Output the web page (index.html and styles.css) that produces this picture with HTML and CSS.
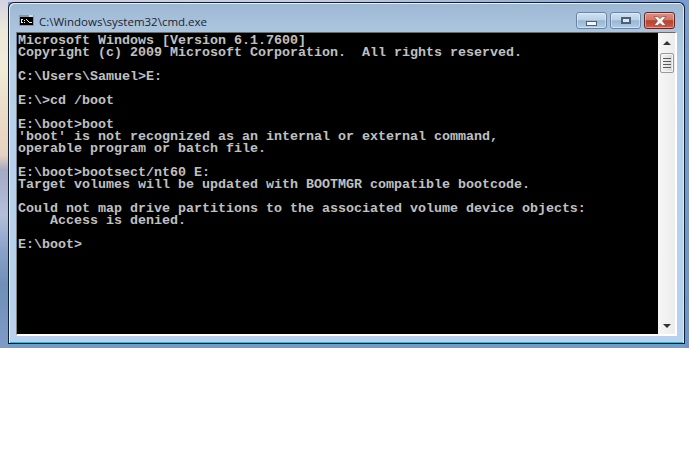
FILE: index.html
```html
<!DOCTYPE html>
<html>
<head>
<meta charset="utf-8">
<title>cmd</title>
<link rel="stylesheet" href="styles.css">
</head>
<body>
<div class="desktop">
  <div class="window">
    <div class="titlebar">
      <svg class="appicon" width="15" height="11" viewBox="0 0 15 11" shape-rendering="crispEdges">
        <rect width="15" height="11" fill="#8f959c"/>
        <rect x="10" y="0" width="4" height="2" fill="#d5d9dd"/>
        <rect x="1" y="2" width="13" height="8" fill="#000"/>
        <path d="M2 4h2v1h-2zM2 5h1v2h-1zM2 7h2v1h-2zM5 5h1v1h-1zM5 7h1v1h-1zM7 4h1v1h-1zM8 5h1v1h-1zM9 6h1v1h-1zM10 7h3v1h-3z" fill="#f0f0f0"/>
      </svg>
      <span class="title">C:\Windows\system32\cmd.exe</span>
      <div class="controls">
        <div class="btn"><span class="min"></span></div>
        <div class="btn"><span class="max"></span></div>
        <div class="btn close">
          <svg width="14" height="10" viewBox="0 0 14 10"><path d="M1 .5h3.500l2.500 2 2.500-2h3.500l-3.500 4.500 3.500 4.500h-3.500l-2.500-2-2.500 2h-3.500l3.500-4.500z" fill="#f6f2f0" stroke="#7d4a48" stroke-width=".7"/></svg>
        </div>
      </div>
    </div>
    <div class="client">
      <pre class="console">Microsoft Windows [Version 6.1.7600]
Copyright (c) 2009 Microsoft Corporation.  All rights reserved.

C:\Users\Samuel&gt;E:

E:\&gt;cd /boot

E:\boot&gt;boot
'boot' is not recognized as an internal or external command,
operable program or batch file.

E:\boot&gt;bootsect/nt60 E:
Target volumes will be updated with BOOTMGR compatible bootcode.

Could not map drive partitions to the associated volume device objects:
    Access is denied.

E:\boot&gt;</pre>
      <div class="scrollbar">
        <div class="arrow up"></div>
        <div class="thumb"><span></span><span></span><span></span><span></span></div>
        <div class="track"></div>
        <div class="arrow down"></div>
      </div>
    </div>
  </div>
</div>
</body>
</html>
```
FILE: styles.css
```css
html, body { margin: 0; padding: 0; background: #fff; }
.desktop {
  height: 348px;
  padding: 2px 4px 0 8px;
  box-sizing: border-box;
  background:
    linear-gradient(180deg, #d3d2e2 0, #ece9da 30px, #f0ecd6 70px, #ecdcc8 110px, #e6d2c0 155px, #a4aac4 170px, #b4bedc 215px, #8aa2c8 250px, #6f8fb8 285px, #7f9bc8 348px) left top / 8px 100% no-repeat,
    linear-gradient(180deg, #7b9ad2 0, #6f9ad2 150px, #6a94cc 348px) right top / 4px 100% no-repeat,
    linear-gradient(90deg, #d3d2e2 0, #c8cce2 45%, #7b9ad2 100%) left top / 100% 2px no-repeat,
    #7a98c8;
}
.window {
  height: 342px;
  box-sizing: border-box;
  border: 1px solid #10202c;
  border-bottom-color: #000;
  border-radius: 6px 6px 0 0;
  background: linear-gradient(180deg, #9db8d4 0, #a8c2dc 20px, #b6cfe9 60px, #b8d1ee 100%);
  box-shadow: inset 1px 1px 0 #e6eff8, inset -1px 0 0 #dbe8f5, inset 0 -1px 0 #17c4d8;
  padding: 0 7px 7px 7px;
  display: flex;
  flex-direction: column;
}
.titlebar {
  height: 29px;
  flex: none;
  display: flex;
  align-items: flex-start;
}
.appicon { margin: 12px 0 0 3px; flex: none; }
.title {
  margin: 11px 0 0 5px;
  font: 11.500px/15px "Open Sans", "Noto Sans", sans-serif;
  color: #1a2430;
  white-space: nowrap;
}
.controls {
  margin-left: auto;
  margin-top: 9px;
  margin-right: 2px;
  display: flex;
  gap: 3px;
}
.btn {
  width: 29px;
  height: 15px;
  border: 1px solid #6c84a4;
  border-radius: 3px;
  background: linear-gradient(180deg, #d0e0f0 0, #bcd2e8 45%, #98b6d2 52%, #b2cce6 100%);
  box-shadow: inset 0 0 0 1px rgba(255,255,255,.4);
  display: flex;
  align-items: center;
  justify-content: center;
}
.min { box-sizing: border-box; width: 11px; height: 5px; margin-top: 6px; background: #f4f7fa; border: 1px solid #4e6078; }
.max { box-sizing: border-box; width: 10px; height: 7px; border: 2px solid #4e6078; background: #dce8f4; }
.close {
  border-color: #5d2828;
  background: linear-gradient(180deg, #dd9184 0, #d27666 45%, #b8402e 52%, #c8604e 100%);
}
.client {
  flex: 1;
  display: flex;
  min-height: 0;
  border-top: 1px solid #6c6c6c;
  border-left: 1px solid #808080;
  border-bottom: 2px solid #fff;
  border-right: 2px solid #fff;
}
.console {
  flex: 1;
  margin: 0;
  padding: 2px 0 0 1px;
  background: #000;
  color: #c0c0c0;
  font: bold 13.333px/12px "Liberation Mono", monospace;
  overflow: hidden;
}
.scrollbar {
  width: 17px;
  flex: none;
  background: linear-gradient(90deg, #f6f6f6 0, #ececec 100%);
  display: flex;
  flex-direction: column;
  align-items: center;
}
.arrow { width: 0; height: 0; flex: none; border-left: 4px solid transparent; border-right: 4px solid transparent; }
.arrow.up { margin-top: 8px; border-bottom: 4px solid #333; }
.arrow.down { margin-bottom: 6px; border-top: 4px solid #333; }
.thumb {
  box-sizing: border-box;
  width: 14px;
  height: 20px;
  margin-top: 8px;
  border: 1px solid #9a9a9a;
  border-radius: 2px;
  background: linear-gradient(90deg, #f6f6f6, #d6d6d6);
  box-shadow: inset 0 0 0 1px #f4f4f4;
  display: flex;
  flex-direction: column;
  align-items: center;
  justify-content: center;
  gap: 2px;
  flex: none;
}
.thumb span { width: 8px; height: 1px; background: #5a5a5a; }
.track { flex: 1; }
```
